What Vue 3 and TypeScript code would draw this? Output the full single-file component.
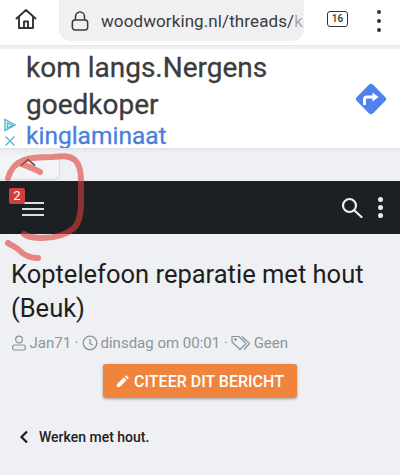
<script setup lang="ts">
const title: string = 'Koptelefoon reparatie met hout (Beuk)'
</script>

<template>
  <div class="page">
    <header class="chrome">
      <svg class="home" viewBox="0 0 24 24" width="24" height="24" fill="none" stroke="#333" stroke-width="1.9" stroke-linejoin="round" stroke-linecap="round">
        <path d="M2.500 11.500 12 3l9.500 8.500M5 9.500V21h14V9.500M10 21v-6.500h4V21" />
      </svg>
      <div class="url">
        <svg class="lock" viewBox="0 0 20 22" width="18" height="20" fill="none" stroke="#3c3c3e" stroke-width="1.700">
          <rect x="1.500" y="10" width="17" height="11" rx="3" />
          <path d="M5 10V6a5 5 0 0 1 10 0v4" />
        </svg>
        <span class="url-text">woodworking.nl/threads/<span class="fade1">k</span><span class="fade2">o</span></span>
      </div>
      <div class="tabs">16</div>
      <div class="dots dark"><i></i><i></i><i></i></div>
    </header>

    <section class="ad">
      <div class="ad-marks">
        <svg viewBox="0 0 14 14" width="14" height="14" fill="none" stroke="#4db6c9" stroke-width="1.400"><path d="M2 1.500v11l10-5.500z" /><path d="M4.500 5v5l4.500-2.500z" /></svg>
        <svg viewBox="0 0 12 12" width="12" height="12" fill="none" stroke="#4db6c9" stroke-width="1.300"><path d="m1.500 1.500 9 9m0-9-9 9" /></svg>
      </div>
      <div class="ad-copy">
        <div class="ad-head">kom langs.Nergens<br />goedkoper</div>
        <div class="ad-brand">kinglaminaat</div>
      </div>
      <svg class="ad-go" viewBox="0 0 34 34" width="34" height="34">
        <rect x="5.500" y="5.500" width="23" height="23" rx="3" fill="#4f82ee" transform="rotate(45 17 17)" />
        <path d="M10.500 23v-5.500a2.500 2.500 0 0 1 2.500-2.500h6" fill="none" stroke="#fff" stroke-width="3" />
        <path d="m18.500 10.500 6 4.500-6 4.500z" fill="#fff" />
      </svg>
    </section>

    <div class="tab-row">
      <div class="collapse">
        <svg viewBox="0 0 18 8" width="18" height="8" fill="none" stroke="#444" stroke-width="1.600"><path d="M2 7.500 9 1.500l7 6" /></svg>
      </div>
    </div>

    <nav class="bar">
      <div class="burger">
        <span class="badge">2</span>
        <i></i><i></i><i></i>
      </div>
      <div class="bar-right">
        <svg viewBox="0 0 22 22" width="22" height="22" fill="none" stroke="#eee" stroke-width="2.200" stroke-linecap="round">
          <circle cx="8.500" cy="8.500" r="6.500" /><path d="m13.500 13.500 7 6.500" />
        </svg>
        <div class="dots"><i></i><i></i><i></i></div>
      </div>
    </nav>

    <main class="content">
      <h1>{{ title }}</h1>
      <div class="meta">
        <svg viewBox="0 0 16 16" width="16" height="16" fill="none" stroke="#8c9599" stroke-width="1.200"><circle cx="8" cy="4.500" r="3.400" /><rect x="1.500" y="10" width="13" height="5" rx="2.500" /></svg>
        <span>Jan71</span><span class="sep">·</span>
        <svg viewBox="0 0 16 16" width="16" height="16" fill="none" stroke="#8c9599" stroke-width="1.300"><circle cx="8" cy="8" r="6.800" /><path d="M8 4v4.500l3 1.500" /></svg>
        <span>dinsdag om 00:01</span><span class="sep">·</span>
        <svg viewBox="0 0 20 16" width="20" height="16" fill="none" stroke="#8c9599" stroke-width="1.200" stroke-linejoin="round"><path d="M1 1.500h7l7 7-6 6-8-7.500zM11 1.500l7.500 7-5.500 6" /><circle cx="4.500" cy="4.500" r=".8" /></svg>
        <span>Geen</span>
      </div>
      <div class="actions">
        <button class="cta" type="button">
          <svg viewBox="0 0 14 14" width="13" height="13" fill="#fff"><path d="M1 13v-3L8.500 2.500l3 3L4 13zM9.500 1.500 11 .2l2.800 2.800-1.300 1.500z" /></svg>
          CITEER DIT BERICHT
        </button>
      </div>
      <div class="crumb">
        <svg viewBox="0 0 10 14" width="10" height="14" fill="none" stroke="#1c1c1c" stroke-width="2.200"><path d="M8 1.500 2.500 7 8 12.500" /></svg>
        <span>Werken met hout.</span>
      </div>
    </main>

    <svg class="scribble" viewBox="0 0 400 475" width="400" height="475" fill="none" stroke="#e03d39" stroke-opacity=".6" stroke-linecap="round" stroke-linejoin="round">
      <path stroke-width="6" d="M40 172c-6-3-13-7-22-9M8 178c2-8 8-15 16-18 8-3 18-3 28-3 9-1 17-2 23 3 5 5 6 12 6 20v22c0 10-1 20-7 26-8 7-20 10-32 10-8 0-14-1-18-4" />
      <path stroke-width="6" d="M8 243c4 3 9 4 12 8 5 5 10 7 18 7" />
    </svg>
  </div>
</template>

<style>
body { margin: 0; background: #eef0f3; }
</style>

<style scoped>
.page { position: relative; width: 400px; height: 475px; overflow: hidden; background: #eef0f3; font-family: Roboto, sans-serif; }
.chrome { height: 46px; background: #fff; display: flex; align-items: flex-start; padding-left: 14px; box-sizing: border-box; border-bottom: 1px solid #e6e6e6; }
.home { margin-top: 7px; flex: none; }
.url { width: 245px; height: 41px; margin-left: 21px; padding-left: 12px; box-sizing: border-box; background: #f0f0f3; border-radius: 0 0 12px 12px; display: flex; align-items: center; gap: 12px; overflow: hidden; flex: none; }
.lock { flex: none; }
.url-text { font-size: 17px; color: #3b3b3d; white-space: nowrap; letter-spacing: .1px; }
.fade1 { color: #a9a9ab; }
.fade2 { color: #d5d5d8; }
.tabs { margin: 11px 0 0 23px; width: 19px; height: 14px; flex: none; border: 1.500px solid #333; border-radius: 3px; font: 500 10px/14px Roboto, sans-serif; text-align: center; color: #333; }
.dots { display: flex; flex-direction: column; gap: 3px; }
.dots i { width: 5px; height: 5px; border-radius: 50%; background: #eee; display: block; }
.dots.dark { margin: 10px 0 0 29px; gap: 5px; }
.dots.dark i { background: #333; width: 4px; height: 4px; }
.ad { height: 99px; margin-top: 3px; background: #fff; border-bottom: 1px solid #e3e3e3; box-shadow: 0 2px 3px rgba(0,0,0,.04); display: flex; position: relative; overflow: hidden; }
.ad-marks { position: absolute; left: 3px; bottom: 1px; display: flex; flex-direction: column; gap: 3px; align-items: center; }
.ad-copy { margin-left: 26px; flex: 1; }
.ad-head { font-size: 28px; line-height: 37px; font-weight: 400; color: #3c3c3e; white-space: nowrap; -webkit-text-stroke: .3px #3c3c3e; }
.ad-brand { font-size: 24.500px; line-height: 26px; color: #4a7fdc; -webkit-text-stroke: .3px #4a7fdc; }
.ad-go { position: absolute; right: 12px; top: 33px; }
.tab-row { height: 32px; padding-top: 6px; box-sizing: border-box; }
.collapse { width: 60px; height: 25px; padding-top: 3px; box-sizing: border-box; background: #f3f4f6; border: 1px solid #dadbdd; border-top: 0; border-left: 0; border-radius: 0 0 6px 0; display: flex; justify-content: center; }
.collapse svg { margin-left: -3px; }
.bar { height: 53px; background: #1d2023; display: flex; align-items: center; justify-content: space-between; padding: 0 17px 0 22px; }
.burger { position: relative; width: 22px; display: flex; flex-direction: column; gap: 4px; margin-top: 3px; }
.burger i { display: block; height: 2px; background: #ddd; }
.badge { position: absolute; left: -13px; top: -14px; width: 16px; height: 16px; background: #cf3f3a; border-radius: 2px; color: #fff; font-size: 13px; line-height: 16px; text-align: center; }
.bar-right { display: flex; align-items: center; gap: 15px; }
.content { padding: 0 11px; }
h1 { margin: 23px 0 0; font-size: 25.500px; line-height: 34px; font-weight: 400; color: #1e1e1e; }
.meta { display: flex; align-items: center; gap: 2.500px; margin-top: 8px; font-size: 15px; color: #8c9599; height: 20px; }
.sep { margin: 0 1px; }
.actions { display: flex; justify-content: center; margin-top: 11px; }
.cta { height: 34px; width: 194px; padding: 0; border: 0; border-radius: 3px; background: #f0843c; color: #fff; font: 500 16px Roboto, sans-serif; display: flex; align-items: center; justify-content: center; gap: 5px; box-shadow: 0 1px 3px rgba(0,0,0,.35); }
.crumb { display: flex; align-items: center; gap: 10px; margin-top: 31px; padding-left: 8px; font-size: 14px; font-weight: 500; color: #222; }
.scribble { position: absolute; left: 0; top: 0; pointer-events: none; }
</style>
